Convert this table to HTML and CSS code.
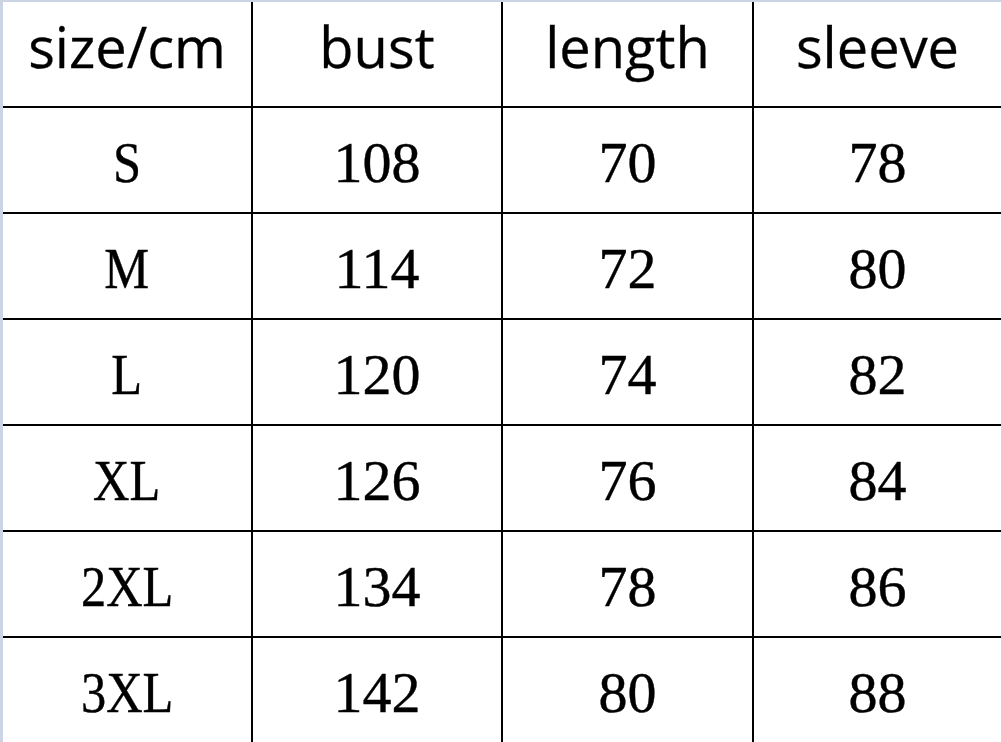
FILE: index.html
```html
<!DOCTYPE html>
<html lang="en">
<head>
<meta charset="utf-8">
<title>Size chart</title>
<link rel="stylesheet" href="styles.css">
</head>
<body>
<div class="frame">
  <div class="chart">
    <div class="cell head">size/cm</div>
    <div class="cell head">bust</div>
    <div class="cell head">length</div>
    <div class="cell head last">sleeve</div>

    <div class="cell"><span class="size">S</span></div>
    <div class="cell">108</div>
    <div class="cell">70</div>
    <div class="cell last">78</div>

    <div class="cell"><span class="size">M</span></div>
    <div class="cell">114</div>
    <div class="cell">72</div>
    <div class="cell last">80</div>

    <div class="cell"><span class="size">L</span></div>
    <div class="cell">120</div>
    <div class="cell">74</div>
    <div class="cell last">82</div>

    <div class="cell"><span class="size">XL</span></div>
    <div class="cell">126</div>
    <div class="cell">76</div>
    <div class="cell last">84</div>

    <div class="cell"><span class="size">2XL</span></div>
    <div class="cell">134</div>
    <div class="cell">78</div>
    <div class="cell last">86</div>

    <div class="cell"><span class="size">3XL</span></div>
    <div class="cell">142</div>
    <div class="cell">80</div>
    <div class="cell last">88</div>
  </div>
</div>
</body>
</html>
```

FILE: styles.css
```css
html, body {
  margin: 0;
  padding: 0;
  background: #ffffff;
  overflow: hidden;
}

.frame {
  width: 1001px;
  height: 742px;
  box-sizing: border-box;
  border-left: 3px solid #cad4e5;
  border-top: 2px solid #cad4e5;
  overflow: hidden;
  background: #ffffff;
}

.chart {
  display: grid;
  grid-template-columns: 250px 250px 251px 1fr;
  grid-auto-rows: 106px;
}

.cell {
  box-sizing: border-box;
  border-right: 2px solid #000;
  border-bottom: 2px solid #000;
  display: flex;
  align-items: center;
  justify-content: center;
  font-family: "Liberation Serif", "Times New Roman", serif;
  font-size: 58px;
  color: #000;
  padding-top: 4px;
  -webkit-text-stroke: 0.4px #000;
}

.cell.last {
  border-right: none;
}

.size {
  display: inline-block;
  transform: scaleX(0.87);
}

.cell.head {
  font-family: "Open Sans", "Noto Sans", sans-serif;
  font-size: 56px;
  padding-top: 0;
  padding-bottom: 16px;
  -webkit-text-stroke: 0.3px #000;
}
```
